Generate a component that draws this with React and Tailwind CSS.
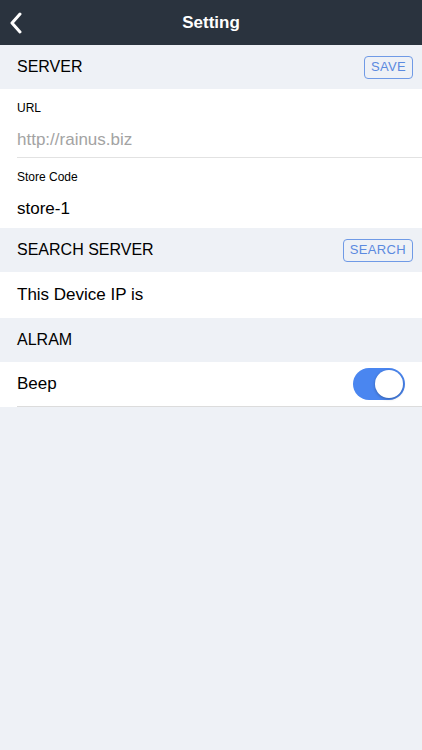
import { useState } from "react";

const font = { fontFamily: '"Helvetica Neue", "Liberation Sans", Arial, sans-serif' };

const SectionHeader = ({ title, action }) => (
  <div className="flex h-[44px] items-center justify-between bg-[#eef1f6] pl-[17px] pr-[9px]">
    <span className="text-[16px] text-black">{title}</span>
    {action && (
      <button className="flex h-[23px] items-center rounded-[4px] border border-[#6f9ae6] px-[6px] text-[13px] tracking-wide text-[#5b8ae0]">
        {action}
      </button>
    )}
  </div>
);

const Field = ({ label, value, muted, last }) => (
  <div
    className={`flex flex-col pt-[13px] ${
      last ? "h-[70px]" : "h-[69px] border-b border-[#e2e2e2]"
    }`}
  >
    <span className="text-[12px] leading-none text-black">{label}</span>
    <span
      className={`mt-[17px] text-[17px] leading-none ${
        muted ? "text-[#a3a3a3]" : "text-black"
      }`}
    >
      {value}
    </span>
  </div>
);

const App = () => {
  const [beep, setBeep] = useState(true);

  return (
    <div className="flex min-h-[750px] flex-col bg-[#eef1f6]" style={font}>
      {/* nav bar */}
      <header className="relative flex h-[45px] items-center justify-center bg-[#2a333e]">
        <button className="absolute left-[9px] top-[12px]">
          <svg width="14" height="22" viewBox="0 0 14 22" fill="none">
            <path
              d="M11 2 L3 11 L11 20"
              stroke="white"
              strokeWidth="3"
              strokeLinecap="round"
              strokeLinejoin="round"
            />
          </svg>
        </button>
        <h1 className="text-[17px] font-semibold text-white">Setting</h1>
      </header>

      <SectionHeader title="SERVER" action="SAVE" />
      <div className="bg-white pl-[17px]">
        <Field label="URL" value="http://rainus.biz" muted />
        <Field label="Store Code" value="store-1" last />
      </div>

      <SectionHeader title="SEARCH SERVER" action="SEARCH" />
      <div className="flex h-[46px] items-center bg-white pl-[17px] text-[17px] text-black">
        This Device IP is
      </div>

      <SectionHeader title="ALRAM" />
      <div className="bg-white pl-[17px]">
        <div className="flex h-[45px] items-center justify-between border-b border-[#dcdcdc] pr-[17px]">
          <span className="text-[17px] text-black">Beep</span>
          <button
            onClick={() => setBeep(!beep)}
            className={`flex h-[32px] w-[52px] items-center rounded-full p-[2px] ${
              beep ? "justify-end bg-[#4a86f0]" : "justify-start bg-[#d8d8d8]"
            }`}
          >
            <span className="h-[28px] w-[28px] rounded-full bg-white shadow-[0_1px_3px_rgba(0,0,0,0.3)]" />
          </button>
        </div>
      </div>
    </div>
  );
};

export default App;
